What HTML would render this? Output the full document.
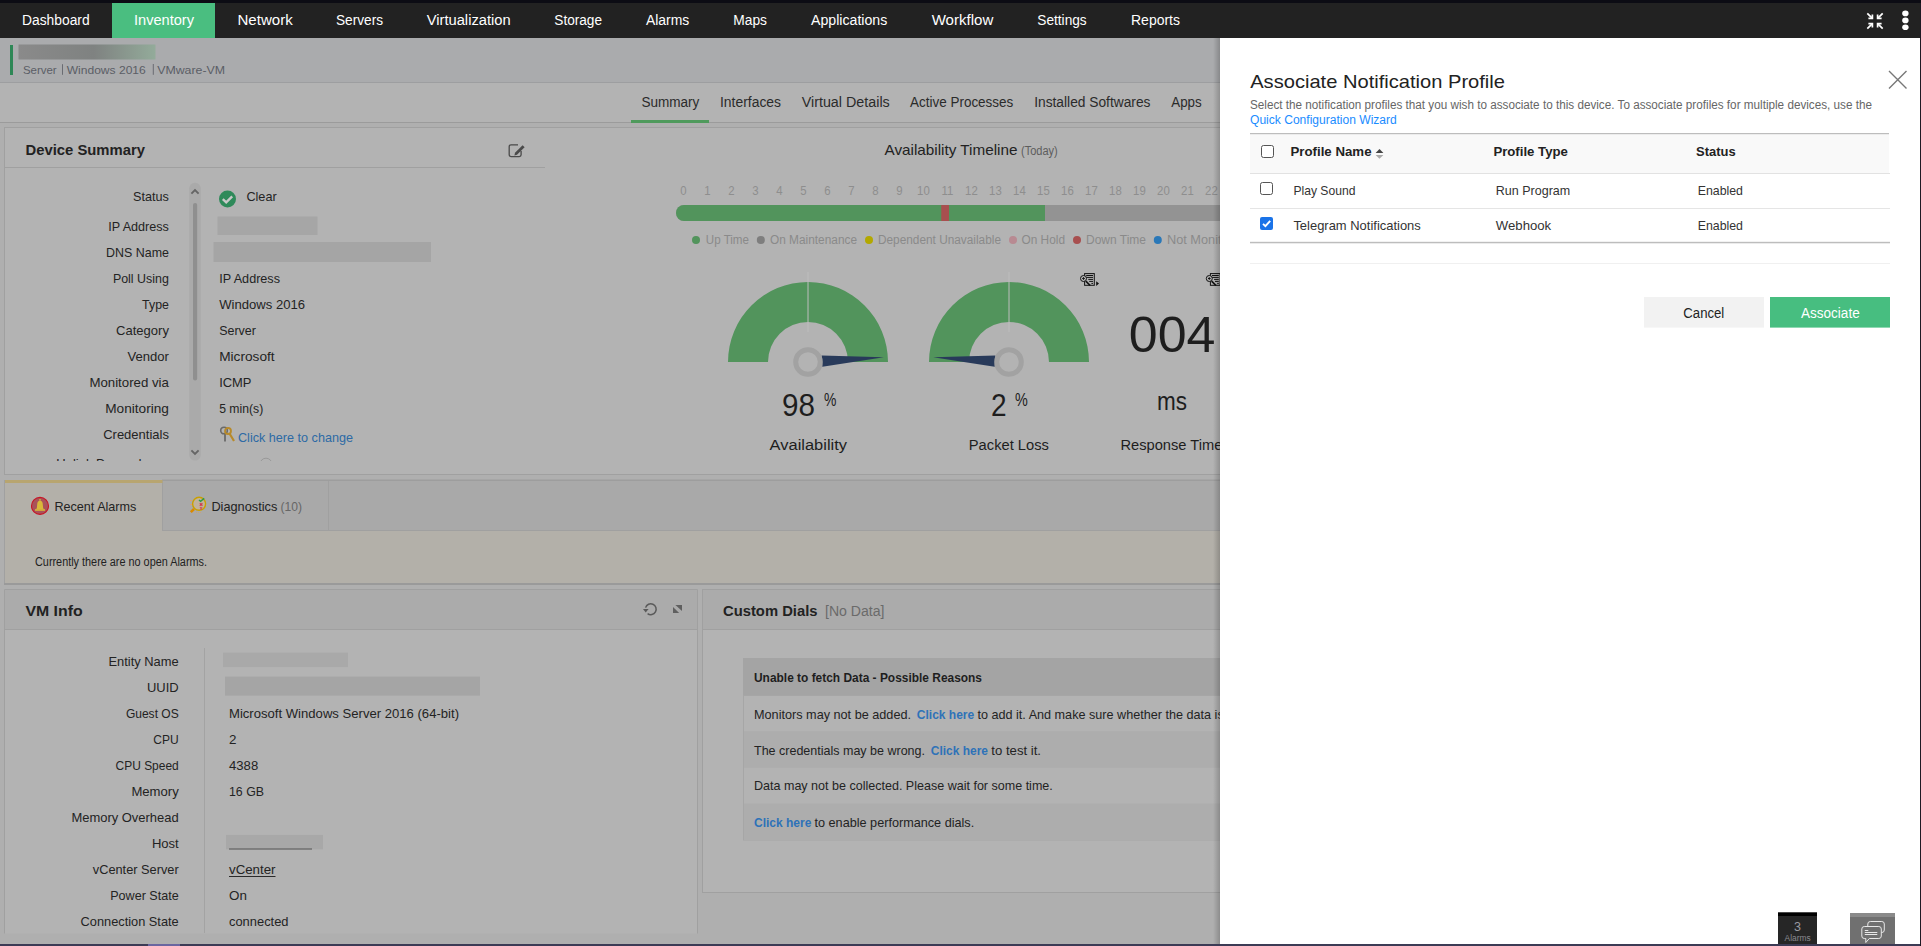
<!DOCTYPE html>
<html><head><meta charset="utf-8"><title>Associate Notification Profile</title>
<style>
html,body{margin:0;padding:0;background:#afafaf;overflow:hidden;}
svg{display:block;font-family:"Liberation Sans",sans-serif;}
</style></head>
<body>
<svg width="1921" height="946" viewBox="0 0 1921 946">
<rect x="0" y="0" width="1921" height="946" fill="#afafaf" />
<rect x="0" y="38" width="1220" height="45" fill="#aaabad" />
<line x1="0" y1="82.5" x2="1220" y2="82.5" stroke="#9d9ea0" stroke-width="1" />
<rect x="10" y="45" width="3" height="30" fill="#2e8756" />
<defs><linearGradient id="gname" x1="0" x2="1" y1="0" y2="0"><stop offset="0" stop-color="#8a8a8a"/><stop offset="0.55" stop-color="#7f8281"/><stop offset="1" stop-color="#93ab9a"/></linearGradient><filter id="blur1" x="-10%" y="-30%" width="120%" height="160%"><feGaussianBlur stdDeviation="0.6"/></filter></defs>
<rect x="18.5" y="44.5" width="137" height="15" fill="url(#gname)" filter="url(#blur1)"/>
<text x="22.9" y="73.8" font-size="11.5" fill="#5b5e66" textLength="33.8" lengthAdjust="spacingAndGlyphs" >Server</text>
<line x1="62.5" y1="64.2" x2="62.5" y2="74.8" stroke="#6a6c72" stroke-width="1" />
<text x="66.7" y="73.8" font-size="11.5" fill="#5b5e66" textLength="79.1" lengthAdjust="spacingAndGlyphs" >Windows 2016</text>
<line x1="153.3" y1="64" x2="153.3" y2="74.8" stroke="#6a6c72" stroke-width="1" />
<text x="157.2" y="73.8" font-size="11.5" fill="#5b5e66" textLength="67.9" lengthAdjust="spacingAndGlyphs" >VMware-VM</text>
<rect x="0" y="83" width="1220" height="39" fill="#b3b3b3" />
<line x1="0" y1="122.5" x2="1220" y2="122.5" stroke="#9b9b9b" stroke-width="1" />
<text x="641.4" y="107" font-size="14" fill="#2b2b2b" textLength="58.0" lengthAdjust="spacingAndGlyphs" >Summary</text>
<text x="720" y="107" font-size="14" fill="#2b2b2b" textLength="61" lengthAdjust="spacingAndGlyphs" >Interfaces</text>
<text x="801.7" y="107" font-size="14" fill="#2b2b2b" textLength="88.1" lengthAdjust="spacingAndGlyphs" >Virtual Details</text>
<text x="910" y="107" font-size="14" fill="#2b2b2b" textLength="103.3" lengthAdjust="spacingAndGlyphs" >Active Processes</text>
<text x="1034.2" y="107" font-size="14" fill="#2b2b2b" textLength="116.3" lengthAdjust="spacingAndGlyphs" >Installed Softwares</text>
<text x="1171.3" y="107" font-size="14" fill="#2b2b2b" textLength="30.4" lengthAdjust="spacingAndGlyphs" >Apps</text>
<rect x="631" y="120" width="78" height="3" fill="#4f9a5c" />
<rect x="4.5" y="127.5" width="1230" height="347" fill="#b3b3b3" stroke="#a0a0a0" stroke-width="1"/>
<text x="25.5" y="154.5" font-size="15" fill="#222" font-weight="700" textLength="119.5" lengthAdjust="spacingAndGlyphs" >Device Summary</text>
<g fill="none" stroke="#4a4a4a" stroke-width="1.3"><path d="M518 144.8 H511 a1.8 1.8 0 0 0 -1.8 1.8 V154.8 a1.8 1.8 0 0 0 1.8 1.8 H519.3 a1.8 1.8 0 0 0 1.8 -1.8 V151"/></g>
<path d="M515 152.8 L522.6 145.2 L524.6 147.2 L517 154.8 L514.4 155.4 Z" fill="#4a4a4a"/>
<line x1="4.5" y1="167.5" x2="545" y2="167.5" stroke="#a0a0a0" stroke-width="1" />
<svg x="0" y="168" width="545" height="293" overflow="hidden"><g transform="translate(0,-168)">
<text x="133.1" y="201" font-size="13.4" fill="#232323" textLength="35.8" lengthAdjust="spacingAndGlyphs" >Status</text>
<text x="108.2" y="231" font-size="13.4" fill="#232323" textLength="60.7" lengthAdjust="spacingAndGlyphs" >IP Address</text>
<text x="106.1" y="257" font-size="13.4" fill="#232323" textLength="62.8" lengthAdjust="spacingAndGlyphs" >DNS Name</text>
<text x="112.9" y="283" font-size="13.4" fill="#232323" textLength="56" lengthAdjust="spacingAndGlyphs" >Poll Using</text>
<text x="142.1" y="309" font-size="13.4" fill="#232323" textLength="26.8" lengthAdjust="spacingAndGlyphs" >Type</text>
<text x="116.1" y="335" font-size="13.4" fill="#232323" textLength="52.8" lengthAdjust="spacingAndGlyphs" >Category</text>
<text x="127.5" y="361" font-size="13.4" fill="#232323" textLength="41.4" lengthAdjust="spacingAndGlyphs" >Vendor</text>
<text x="89.4" y="387" font-size="13.4" fill="#232323" textLength="79.5" lengthAdjust="spacingAndGlyphs" >Monitored via</text>
<text x="105.2" y="413" font-size="13.4" fill="#232323" textLength="63.7" lengthAdjust="spacingAndGlyphs" >Monitoring</text>
<text x="103.2" y="439" font-size="13.4" fill="#232323" textLength="65.7" lengthAdjust="spacingAndGlyphs" >Credentials</text>
<text x="169" y="467.5" font-size="13" fill="#232323" text-anchor="end" >Uplink Dependency</text>
<circle cx="227.5" cy="199" r="8.5" fill="#2f8a5a"/>
<path d="M222.8 199.2 L226.2 202.4 L232.2 196.4" fill="none" stroke="#c9c9c9" stroke-width="2.4"/>
<text x="246.4" y="201" font-size="13.4" fill="#232323" textLength="30.3" lengthAdjust="spacingAndGlyphs" >Clear</text>
<rect x="217.5" y="216.5" width="100" height="18.5" fill="#a6a6a6" filter="url(#blur1)"/>
<rect x="213.5" y="242" width="217.5" height="20" fill="#a5a5a5" filter="url(#blur1)"/>
<text x="219.2" y="283" font-size="13.4" fill="#232323" textLength="60.8" lengthAdjust="spacingAndGlyphs" >IP Address</text>
<text x="219.2" y="309" font-size="13.4" fill="#232323" textLength="85.8" lengthAdjust="spacingAndGlyphs" >Windows 2016</text>
<text x="219.2" y="335" font-size="13.4" fill="#232323" textLength="36.7" lengthAdjust="spacingAndGlyphs" >Server</text>
<text x="219.2" y="361" font-size="13.4" fill="#232323" textLength="55.4" lengthAdjust="spacingAndGlyphs" >Microsoft</text>
<text x="219.2" y="387" font-size="13.4" fill="#232323" textLength="32.3" lengthAdjust="spacingAndGlyphs" >ICMP</text>
<text x="219.2" y="413" font-size="13.4" fill="#232323" textLength="44" lengthAdjust="spacingAndGlyphs" >5 min(s)</text>
<g transform="translate(220,426)"><circle cx="4" cy="4.5" r="3.3" fill="none" stroke="#6a6a6a" stroke-width="1.6"/><path d="M5 7.5 V15.5" stroke="#6a6a6a" stroke-width="1.8"/><circle cx="8" cy="5" r="3" fill="none" stroke="#b88a2a" stroke-width="1.8"/><path d="M9.5 7.5 L14 15" stroke="#b88a2a" stroke-width="2.2"/></g>
<text x="238" y="442" font-size="13" fill="#2d6aa5" textLength="115" lengthAdjust="spacingAndGlyphs" >Click here to change</text>
<path d="M260 464.2 A6 6 0 0 1 272 464.2" fill="none" stroke="#999" stroke-width="1"/>
</g></svg>
<rect x="189.2" y="182.8" width="11.6" height="277.8" rx="5.8" fill="#aaaaaa"/>
<rect x="193" y="203" width="4.2" height="177.5" fill="#8f8f8f" rx="2.1"/>
<path d="M191.4 193.6 L195 190 L198.6 193.6" fill="none" stroke="#656565" stroke-width="1.9"/>
<path d="M191.4 450.4 L195 454 L198.6 450.4" fill="none" stroke="#656565" stroke-width="1.9"/>
<text x="884.5" y="155" font-size="15" fill="#222" textLength="133" lengthAdjust="spacingAndGlyphs" >Availability Timeline</text>
<text x="1021" y="155" font-size="12" fill="#5d5d5d" textLength="36.8" lengthAdjust="spacingAndGlyphs" >(Today)</text>
<g transform="translate(683.4,194.8) scale(0.95,1) translate(-683.4,-194.8)"><text x="683.4" y="194.8" font-size="12" fill="#8e8e8e" text-anchor="middle" >0</text></g>
<g transform="translate(707.4,194.8) scale(0.95,1) translate(-707.4,-194.8)"><text x="707.4" y="194.8" font-size="12" fill="#8e8e8e" text-anchor="middle" >1</text></g>
<g transform="translate(731.4,194.8) scale(0.95,1) translate(-731.4,-194.8)"><text x="731.4" y="194.8" font-size="12" fill="#8e8e8e" text-anchor="middle" >2</text></g>
<g transform="translate(755.4,194.8) scale(0.95,1) translate(-755.4,-194.8)"><text x="755.4" y="194.8" font-size="12" fill="#8e8e8e" text-anchor="middle" >3</text></g>
<g transform="translate(779.4,194.8) scale(0.95,1) translate(-779.4,-194.8)"><text x="779.4" y="194.8" font-size="12" fill="#8e8e8e" text-anchor="middle" >4</text></g>
<g transform="translate(803.4,194.8) scale(0.95,1) translate(-803.4,-194.8)"><text x="803.4" y="194.8" font-size="12" fill="#8e8e8e" text-anchor="middle" >5</text></g>
<g transform="translate(827.4,194.8) scale(0.95,1) translate(-827.4,-194.8)"><text x="827.4" y="194.8" font-size="12" fill="#8e8e8e" text-anchor="middle" >6</text></g>
<g transform="translate(851.4,194.8) scale(0.95,1) translate(-851.4,-194.8)"><text x="851.4" y="194.8" font-size="12" fill="#8e8e8e" text-anchor="middle" >7</text></g>
<g transform="translate(875.4,194.8) scale(0.95,1) translate(-875.4,-194.8)"><text x="875.4" y="194.8" font-size="12" fill="#8e8e8e" text-anchor="middle" >8</text></g>
<g transform="translate(899.4,194.8) scale(0.95,1) translate(-899.4,-194.8)"><text x="899.4" y="194.8" font-size="12" fill="#8e8e8e" text-anchor="middle" >9</text></g>
<g transform="translate(923.4,194.8) scale(0.95,1) translate(-923.4,-194.8)"><text x="923.4" y="194.8" font-size="12" fill="#8e8e8e" text-anchor="middle" >10</text></g>
<g transform="translate(947.4,194.8) scale(0.95,1) translate(-947.4,-194.8)"><text x="947.4" y="194.8" font-size="12" fill="#8e8e8e" text-anchor="middle" >11</text></g>
<g transform="translate(971.4,194.8) scale(0.95,1) translate(-971.4,-194.8)"><text x="971.4" y="194.8" font-size="12" fill="#8e8e8e" text-anchor="middle" >12</text></g>
<g transform="translate(995.4,194.8) scale(0.95,1) translate(-995.4,-194.8)"><text x="995.4" y="194.8" font-size="12" fill="#8e8e8e" text-anchor="middle" >13</text></g>
<g transform="translate(1019.4,194.8) scale(0.95,1) translate(-1019.4,-194.8)"><text x="1019.4" y="194.8" font-size="12" fill="#8e8e8e" text-anchor="middle" >14</text></g>
<g transform="translate(1043.4,194.8) scale(0.95,1) translate(-1043.4,-194.8)"><text x="1043.4" y="194.8" font-size="12" fill="#8e8e8e" text-anchor="middle" >15</text></g>
<g transform="translate(1067.4,194.8) scale(0.95,1) translate(-1067.4,-194.8)"><text x="1067.4" y="194.8" font-size="12" fill="#8e8e8e" text-anchor="middle" >16</text></g>
<g transform="translate(1091.4,194.8) scale(0.95,1) translate(-1091.4,-194.8)"><text x="1091.4" y="194.8" font-size="12" fill="#8e8e8e" text-anchor="middle" >17</text></g>
<g transform="translate(1115.4,194.8) scale(0.95,1) translate(-1115.4,-194.8)"><text x="1115.4" y="194.8" font-size="12" fill="#8e8e8e" text-anchor="middle" >18</text></g>
<g transform="translate(1139.4,194.8) scale(0.95,1) translate(-1139.4,-194.8)"><text x="1139.4" y="194.8" font-size="12" fill="#8e8e8e" text-anchor="middle" >19</text></g>
<g transform="translate(1163.4,194.8) scale(0.95,1) translate(-1163.4,-194.8)"><text x="1163.4" y="194.8" font-size="12" fill="#8e8e8e" text-anchor="middle" >20</text></g>
<g transform="translate(1187.4,194.8) scale(0.95,1) translate(-1187.4,-194.8)"><text x="1187.4" y="194.8" font-size="12" fill="#8e8e8e" text-anchor="middle" >21</text></g>
<g transform="translate(1211.4,194.8) scale(0.95,1) translate(-1211.4,-194.8)"><text x="1211.4" y="194.8" font-size="12" fill="#8e8e8e" text-anchor="middle" >22</text></g>
<svg x="676" y="205" width="544" height="16" overflow="hidden"><rect x="0" y="0" width="700" height="16" rx="8" fill="#939393"/><path d="M8 0 H369 V16 H8 A8 8 0 0 1 8 0 Z" fill="#52945c"/><rect x="265.25" y="0" width="7.75" height="16" fill="#a84f4f"/></svg>
<circle cx="696" cy="240" r="4" fill="#52945c"/>
<text x="705.8" y="244" font-size="12.5" fill="#8a8a8a" textLength="43.2" lengthAdjust="spacingAndGlyphs" >Up Time</text>
<circle cx="760.8" cy="240" r="4" fill="#7e7e7e"/>
<text x="770" y="244" font-size="12.5" fill="#8a8a8a" textLength="87" lengthAdjust="spacingAndGlyphs" >On Maintenance</text>
<circle cx="869" cy="240" r="4" fill="#b3a800"/>
<text x="878" y="244" font-size="12.5" fill="#8a8a8a" textLength="123" lengthAdjust="spacingAndGlyphs" >Dependent Unavailable</text>
<circle cx="1013" cy="240" r="4" fill="#b88a92"/>
<text x="1021.5" y="244" font-size="12.5" fill="#8a8a8a" textLength="43.5" lengthAdjust="spacingAndGlyphs" >On Hold</text>
<circle cx="1077" cy="240" r="4" fill="#a84f4f"/>
<text x="1086" y="244" font-size="12.5" fill="#8a8a8a" textLength="60" lengthAdjust="spacingAndGlyphs" >Down Time</text>
<circle cx="1157.8" cy="240" r="4" fill="#2a78b8"/>
<text x="1167" y="244" font-size="12.5" fill="#8a8a8a" textLength="80" lengthAdjust="spacingAndGlyphs" >Not Monitored</text>
<path d="M728 362 A80 80 0 0 1 888 362 L848 362 A40 40 0 0 0 768 362 Z" fill="#52945c"/>
<line x1="808" y1="272" x2="808" y2="332" stroke="#bdbdbd" stroke-width="1" />
<path d="M822.32 366.71 L883.85 357.23 L821.62 355.53 Z" fill="#283a5a"/>
<circle cx="808" cy="362" r="12.3" fill="#b3b3b3" stroke="#a2a2a2" stroke-width="5"/>
<path d="M929 362 A80 80 0 0 1 1089 362 L1049 362 A40 40 0 0 0 969 362 Z" fill="#52945c"/>
<line x1="1009" y1="272" x2="1009" y2="332" stroke="#bdbdbd" stroke-width="1" />
<path d="M995.38 355.53 L933.15 357.23 L994.68 366.71 Z" fill="#283a5a"/>
<circle cx="1009" cy="362" r="12.3" fill="#b3b3b3" stroke="#a2a2a2" stroke-width="5"/>
<text x="782" y="416.4" font-size="31" fill="#1e1e1e" textLength="33" lengthAdjust="spacingAndGlyphs" >98</text>
<text x="824" y="405.5" font-size="19" fill="#1e1e1e" textLength="12.4" lengthAdjust="spacingAndGlyphs" >%</text>
<text x="769.6" y="449.6" font-size="15.5" fill="#1e1e1e" textLength="77.4" lengthAdjust="spacingAndGlyphs" >Availability</text>
<text x="991" y="416.4" font-size="31" fill="#1e1e1e" textLength="15.6" lengthAdjust="spacingAndGlyphs" >2</text>
<text x="1015" y="405.5" font-size="19" fill="#1e1e1e" textLength="12.8" lengthAdjust="spacingAndGlyphs" >%</text>
<text x="968.8" y="449.6" font-size="15.5" fill="#1e1e1e" textLength="80.1" lengthAdjust="spacingAndGlyphs" >Packet Loss</text>
<text x="1128.8" y="352" font-size="50" fill="#1e1e1e" textLength="86.7" lengthAdjust="spacingAndGlyphs" >004</text>
<text x="1157" y="409.7" font-size="25" fill="#1e1e1e" textLength="30" lengthAdjust="spacingAndGlyphs" >ms</text>
<text x="1120.4" y="449.6" font-size="15.5" fill="#1e1e1e" textLength="102" lengthAdjust="spacingAndGlyphs" >Response Time</text>
<g transform="translate(0,0)"><g stroke="#111" fill="none" stroke-width="1"><rect x="1084.6" y="273.6" width="9.7" height="11.7"/><path d="M1086.2 275.5 H1093 M1086.2 277.4 H1093 M1088.3 279.4 H1093 M1089.2 281.4 H1093 M1091.4 283.4 H1093"/><circle cx="1083.5" cy="278.5" r="3" fill="#b3b3b3"/><path d="M1083.5 277.2 V279.8 M1082.2 278.5 H1084.8"/><path d="M1085.8 281.2 L1090.2 285.5" stroke-width="1.7"/></g><path d="M1096.2 281.2 L1099 283.6 L1096.2 286 Z" fill="#111"/></g>
<g transform="translate(125.8,0)"><g stroke="#111" fill="none" stroke-width="1"><rect x="1084.6" y="273.6" width="9.7" height="11.7"/><path d="M1086.2 275.5 H1093 M1086.2 277.4 H1093 M1088.3 279.4 H1093 M1089.2 281.4 H1093 M1091.4 283.4 H1093"/><circle cx="1083.5" cy="278.5" r="3" fill="#b3b3b3"/><path d="M1083.5 277.2 V279.8 M1082.2 278.5 H1084.8"/><path d="M1085.8 281.2 L1090.2 285.5" stroke-width="1.7"/></g><path d="M1096.2 281.2 L1099 283.6 L1096.2 286 Z" fill="#111"/></g>
<rect x="5" y="480" width="1220" height="103" fill="#b3b0a9" />
<rect x="162" y="480" width="1060" height="51" fill="#a9a9a9" />
<line x1="162.5" y1="480" x2="162.5" y2="531" stroke="#a0a0a0" stroke-width="1" />
<line x1="328.5" y1="480" x2="328.5" y2="531" stroke="#a0a0a0" stroke-width="1" />
<line x1="162" y1="530.5" x2="1220" y2="530.5" stroke="#a0a0a0" stroke-width="1" />
<rect x="162" y="479.5" width="1060" height="1.5" fill="#9d9d9d" />
<rect x="5" y="480" width="157.5" height="3" fill="#b8a56f" />
<line x1="4.5" y1="480" x2="4.5" y2="584" stroke="#a0a0a0" stroke-width="1" />
<rect x="4" y="583" width="1216" height="2" fill="#9a9a9a" />
<circle cx="40" cy="505.9" r="8.5" fill="#a9525a" stroke="#c81424" stroke-width="1.1"/>
<path d="M36 509.5 Q37.2 508 37.2 504.5 Q37.2 500.8 40 500.4 Q42.8 500.8 42.8 504.5 Q42.8 508 44 509.5 Z" fill="#d9b83a"/>
<rect x="39.3" y="499" width="1.4" height="1.6" fill="#d9b83a"/><rect x="35" y="509.2" width="10" height="1.6" fill="#d9b83a"/>
<text x="54.4" y="510.6" font-size="13" fill="#232323" textLength="82" lengthAdjust="spacingAndGlyphs" >Recent Alarms</text>
<circle cx="199.1" cy="503.8" r="6.5" fill="#c2b29c" stroke="#c9a000" stroke-width="1.4"/><path d="M194 509 L190.8 512.2" stroke="#d98a00" stroke-width="2.6"/><path d="M199 500 L200.6 501.4 L204.2 498.4" fill="none" stroke="#2a9a50" stroke-width="1.4"/><path d="M199.8 503.3 L202.4 505.8 M202.4 503.3 L199.8 505.8" stroke="#d04050" stroke-width="1.2"/><path d="M200 507.3 L202.2 509.3 M202.2 507.3 L200 509.3" stroke="#d04050" stroke-width="1.1"/><path d="M196.3 512.4 h0.8 M198.2 512.4 h0.8 M200.1 512.4 h0.8" stroke="#d9a060" stroke-width="0.9"/><path d="M190 500.5 h2 M190 504.5 h2" stroke="#d9a070" stroke-width="1"/>
<text x="211.4" y="511" font-size="13" fill="#232323" textLength="65.9" lengthAdjust="spacingAndGlyphs" >Diagnostics</text>
<text x="280.5" y="511" font-size="13" fill="#666" textLength="21.5" lengthAdjust="spacingAndGlyphs" >(10)</text>
<text x="35" y="565.6" font-size="12" fill="#222" textLength="172" lengthAdjust="spacingAndGlyphs" >Currently there are no open Alarms.</text>
<rect x="4.5" y="589.5" width="693" height="344" fill="#b3b3b3" />
<path d="M4.5 933.5 V589.5 H697.5 V933.5" fill="none" stroke="#a0a0a0" stroke-width="1"/>
<rect x="5" y="590" width="692" height="39.5" fill="#ababab" />
<line x1="4.5" y1="629.5" x2="697.5" y2="629.5" stroke="#a0a0a0" stroke-width="1" />
<text x="25.4" y="616" font-size="15" fill="#222" font-weight="700" textLength="57.2" lengthAdjust="spacingAndGlyphs" >VM Info</text>
<path d="M645.6 607.6 A5.4 5.4 0 1 1 647.6 613.6" fill="none" stroke="#5a5a5a" stroke-width="1.5"/>
<path d="M643 609.1 L648.6 609.1 L645.7 612.5 Z" fill="#5a5a5a"/>
<path d="M675.4 605 H682 V611 Z" fill="#5f5f5f"/><path d="M673 607.1 V613 H679.2 Z" fill="#5f5f5f"/>
<line x1="204.5" y1="648" x2="204.5" y2="933" stroke="#a3a3a3" stroke-width="1" />
<text x="108.5" y="666" font-size="13.4" fill="#232323" textLength="70.2" lengthAdjust="spacingAndGlyphs" >Entity Name</text>
<text x="147.0" y="692" font-size="13.4" fill="#232323" textLength="31.7" lengthAdjust="spacingAndGlyphs" >UUID</text>
<text x="125.9" y="718" font-size="13.4" fill="#232323" textLength="52.8" lengthAdjust="spacingAndGlyphs" >Guest OS</text>
<text x="229" y="718" font-size="13.4" fill="#232323" textLength="230" lengthAdjust="spacingAndGlyphs" >Microsoft Windows Server 2016 (64-bit)</text>
<text x="153.3" y="744" font-size="13.4" fill="#232323" textLength="25.4" lengthAdjust="spacingAndGlyphs" >CPU</text>
<text x="229" y="744" font-size="13.4" fill="#232323" >2</text>
<text x="115.6" y="770" font-size="13.4" fill="#232323" textLength="63.1" lengthAdjust="spacingAndGlyphs" >CPU Speed</text>
<text x="229" y="770" font-size="13.4" fill="#232323" textLength="29.2" lengthAdjust="spacingAndGlyphs" >4388</text>
<text x="131.4" y="796" font-size="13.4" fill="#232323" textLength="47.3" lengthAdjust="spacingAndGlyphs" >Memory</text>
<text x="229" y="796" font-size="13.4" fill="#232323" textLength="35" lengthAdjust="spacingAndGlyphs" >16 GB</text>
<text x="71.4" y="822" font-size="13.4" fill="#232323" textLength="107.3" lengthAdjust="spacingAndGlyphs" >Memory Overhead</text>
<text x="151.9" y="848" font-size="13.4" fill="#232323" textLength="26.8" lengthAdjust="spacingAndGlyphs" >Host</text>
<text x="92.8" y="874" font-size="13.4" fill="#232323" textLength="85.9" lengthAdjust="spacingAndGlyphs" >vCenter Server</text>
<text x="229" y="874" font-size="13.4" fill="#232323" textLength="46.5" lengthAdjust="spacingAndGlyphs" >vCenter</text>
<text x="110.2" y="900" font-size="13.4" fill="#232323" textLength="68.5" lengthAdjust="spacingAndGlyphs" >Power State</text>
<text x="229" y="900" font-size="13.4" fill="#232323" >On</text>
<text x="80.6" y="926" font-size="13.4" fill="#232323" textLength="98.1" lengthAdjust="spacingAndGlyphs" >Connection State</text>
<text x="229" y="926" font-size="13.4" fill="#232323" textLength="59.5" lengthAdjust="spacingAndGlyphs" >connected</text>
<rect x="223" y="652.6" width="125" height="14.5" fill="#a9a9a9" filter="url(#blur1)"/>
<rect x="225" y="676.6" width="255" height="19" fill="#a5a5a5" filter="url(#blur1)"/>
<rect x="226" y="834.8" width="97" height="14.6" fill="#a8a8a8" filter="url(#blur1)"/>
<line x1="229" y1="849" x2="312" y2="849" stroke="#555" stroke-width="1" />
<line x1="229" y1="876.5" x2="275.5" y2="876.5" stroke="#2a2a2a" stroke-width="1" />
<rect x="702.5" y="589.5" width="540" height="303" fill="#b3b3b3" stroke="#a0a0a0" stroke-width="1"/>
<rect x="703" y="590" width="540" height="39.5" fill="#ababab" />
<line x1="702.5" y1="629.5" x2="1230" y2="629.5" stroke="#a0a0a0" stroke-width="1" />
<text x="723" y="616" font-size="15" fill="#222" font-weight="700" textLength="94.5" lengthAdjust="spacingAndGlyphs" >Custom Dials</text>
<text x="825" y="616" font-size="14" fill="#6a6a6a" textLength="59.5" lengthAdjust="spacingAndGlyphs" >[No Data]</text>
<rect x="743" y="658" width="500" height="37.5" fill="#a4a4a4" />
<rect x="743.5" y="695.5" width="500" height="144.5" fill="#b3b3b3" stroke="#a6a6a6" stroke-width="1"/>
<rect x="744" y="731.3" width="500" height="36.5" fill="#adadad" />
<rect x="744" y="803.5" width="500" height="36.5" fill="#adadad" />
<text x="754" y="682" font-size="13" fill="#1e1e1e" font-weight="700" textLength="228" lengthAdjust="spacingAndGlyphs" >Unable to fetch Data - Possible Reasons</text>
<text x="754" y="718.6" font-size="13" fill="#232323" textLength="157" lengthAdjust="spacingAndGlyphs" >Monitors may not be added.</text>
<text x="916.8" y="718.6" font-size="13" fill="#2e72b8" font-weight="700" textLength="57.4" lengthAdjust="spacingAndGlyphs" >Click here</text>
<text x="977.4" y="718.6" font-size="13.4" fill="#232323" textLength="337.6" lengthAdjust="spacingAndGlyphs" >to add it. And make sure whether the data is being collected.</text>
<text x="754" y="754.5" font-size="13" fill="#232323" textLength="171" lengthAdjust="spacingAndGlyphs" >The credentials may be wrong.</text>
<text x="930.8" y="754.5" font-size="13" fill="#2e72b8" font-weight="700" textLength="57.2" lengthAdjust="spacingAndGlyphs" >Click here</text>
<text x="991.3" y="754.5" font-size="13" fill="#232323" textLength="49.7" lengthAdjust="spacingAndGlyphs" >to test it.</text>
<text x="754" y="790.3" font-size="13" fill="#232323" textLength="298.8" lengthAdjust="spacingAndGlyphs" >Data may not be collected. Please wait for some time.</text>
<text x="754" y="826.5" font-size="13" fill="#2e72b8" font-weight="700" textLength="57.4" lengthAdjust="spacingAndGlyphs" >Click here</text>
<text x="814.5" y="826.5" font-size="13" fill="#232323" textLength="159.7" lengthAdjust="spacingAndGlyphs" >to enable performance dials.</text>
<rect x="0" y="944" width="1921" height="2" fill="#3c3b55" />
<rect x="148" y="944" width="32" height="2" fill="#6a66a0" />
<defs><linearGradient id="shadow" x1="0" x2="1"><stop offset="0" stop-color="#000" stop-opacity="0"/><stop offset="1" stop-color="#000" stop-opacity="0.2"/></linearGradient></defs>
<rect x="1213" y="38" width="7" height="906" fill="url(#shadow)" />
<rect x="1220" y="38" width="700" height="906" fill="#ffffff" />
<rect x="1920" y="0" width="1" height="946" fill="#1e1a24" />
<text x="1250.2" y="88.1" font-size="19" fill="#222" textLength="254.8" lengthAdjust="spacingAndGlyphs" >Associate Notification Profile</text>
<path d="M1889 71 L1906.5 88.5 M1906.5 71 L1889 88.5" stroke="#777" stroke-width="1.4"/>
<text x="1250" y="109.1" font-size="12" fill="#666" textLength="622" lengthAdjust="spacingAndGlyphs" >Select the notification profiles that you wish to associate to this device. To associate profiles for multiple devices, use the</text>
<text x="1250" y="124" font-size="12" fill="#1a8cff" textLength="146.8" lengthAdjust="spacingAndGlyphs" >Quick Configuration Wizard</text>
<rect x="1250" y="133" width="639" height="1.5" fill="#bdbdbd" />
<rect x="1250" y="134.5" width="639" height="38.5" fill="#f9f9f9" />
<line x1="1250" y1="173.5" x2="1890" y2="173.5" stroke="#e2e2e2" stroke-width="1" />
<line x1="1250" y1="208.5" x2="1890" y2="208.5" stroke="#e5e5e5" stroke-width="1" />
<rect x="1250" y="241.8" width="640" height="1.5" fill="#bdbdbd" />
<line x1="1250" y1="263.5" x2="1890" y2="263.5" stroke="#f0f0f0" stroke-width="1" />
<rect x="1261.5" y="145.5" width="12" height="12" rx="2" fill="#fff" stroke="#555" stroke-width="1"/>
<rect x="1260.5" y="182.5" width="12" height="12" rx="2" fill="#fff" stroke="#555" stroke-width="1"/>
<rect x="1260" y="217" width="13" height="13" rx="2" fill="#1a73e8"/>
<path d="M1263 223.8 L1265.4 226.2 L1270.2 220.8" fill="none" stroke="#fff" stroke-width="1.9"/>
<text x="1290.5" y="156.1" font-size="13.5" fill="#222" font-weight="700" textLength="81" lengthAdjust="spacingAndGlyphs" >Profile Name</text>
<path d="M1375.6 153 L1379.5 149 L1383.4 153 Z" fill="#444"/><path d="M1375.6 155 L1379.5 158.8 L1383.4 155 Z" fill="#aaa"/>
<text x="1493.4" y="156.1" font-size="13.5" fill="#222" font-weight="700" textLength="74.5" lengthAdjust="spacingAndGlyphs" >Profile Type</text>
<text x="1696" y="156.1" font-size="13.5" fill="#222" font-weight="700" textLength="39.6" lengthAdjust="spacingAndGlyphs" >Status</text>
<text x="1293.4" y="195" font-size="13" fill="#333" textLength="62" lengthAdjust="spacingAndGlyphs" >Play Sound</text>
<text x="1495.8" y="195" font-size="13" fill="#333" textLength="74.4" lengthAdjust="spacingAndGlyphs" >Run Program</text>
<text x="1697.7" y="195" font-size="13" fill="#333" textLength="45.3" lengthAdjust="spacingAndGlyphs" >Enabled</text>
<text x="1293.4" y="229.8" font-size="13" fill="#333" textLength="127.4" lengthAdjust="spacingAndGlyphs" >Telegram Notifications</text>
<text x="1495.8" y="229.8" font-size="13" fill="#333" textLength="55.4" lengthAdjust="spacingAndGlyphs" >Webhook</text>
<text x="1697.7" y="229.8" font-size="13" fill="#333" textLength="45.3" lengthAdjust="spacingAndGlyphs" >Enabled</text>
<rect x="1644" y="297" width="120" height="30.6" fill="#f2f2f2" />
<text x="1683.3" y="318.2" font-size="14" fill="#222" textLength="41" lengthAdjust="spacingAndGlyphs" >Cancel</text>
<rect x="1770" y="297" width="120" height="30.6" fill="#47be80" />
<text x="1801" y="318.2" font-size="14" fill="#fff" textLength="58.7" lengthAdjust="spacingAndGlyphs" >Associate</text>
<rect x="1778" y="912.5" width="39" height="31.5" fill="#262626" />
<rect x="1778" y="912.5" width="39" height="3.5" fill="#000" />
<text x="1797.5" y="930.8" font-size="12.5" fill="#9a9aa0" text-anchor="middle" >3</text>
<text x="1784.6" y="940.5" font-size="8.5" fill="#8a8a90" textLength="26" lengthAdjust="spacingAndGlyphs" >Alarms</text>
<rect x="1850" y="913" width="45" height="31" fill="#707070" />
<rect x="1850" y="913" width="45" height="4" fill="#8a8a8a" />
<g fill="none" stroke="#e8e8e8" stroke-width="1" transform="translate(1.3,0)"><rect x="1866.5" y="921.5" width="16.5" height="11" rx="2.5"/><path d="M1863 926.5 H1877.5 a2.5 2.5 0 0 1 2.5 2.5 V936 a2.5 2.5 0 0 1 -2.5 2.5 H1868 L1864.5 942.5 V938.5 H1863 a2.5 2.5 0 0 1 -2.5 -2.5 V929 a2.5 2.5 0 0 1 2.5 -2.5 Z" fill="#707070"/><path d="M1863.5 930.5 H1867 M1863.5 932.5 H1876 M1863.5 934.5 H1876"/></g>
<rect x="0" y="0" width="1921" height="3" fill="#0c0c14" />
<rect x="0" y="3" width="1920" height="35" fill="#222222" />
<rect x="112" y="3" width="103" height="35" fill="#4abe80" />
<text x="22" y="25.4" font-size="15.5" fill="#ffffff" textLength="67.6" lengthAdjust="spacingAndGlyphs" >Dashboard</text>
<text x="134" y="25.4" font-size="15.5" fill="#ffffff" textLength="60" lengthAdjust="spacingAndGlyphs" >Inventory</text>
<text x="237.5" y="25.4" font-size="15.5" fill="#ffffff" textLength="55.2" lengthAdjust="spacingAndGlyphs" >Network</text>
<text x="336" y="25.4" font-size="15.5" fill="#ffffff" textLength="47" lengthAdjust="spacingAndGlyphs" >Servers</text>
<text x="426.7" y="25.4" font-size="15.5" fill="#ffffff" textLength="84.0" lengthAdjust="spacingAndGlyphs" >Virtualization</text>
<text x="554.3" y="25.4" font-size="15.5" fill="#ffffff" textLength="47.7" lengthAdjust="spacingAndGlyphs" >Storage</text>
<text x="646" y="25.4" font-size="15.5" fill="#ffffff" textLength="43.3" lengthAdjust="spacingAndGlyphs" >Alarms</text>
<text x="733.3" y="25.4" font-size="15.5" fill="#ffffff" textLength="33.7" lengthAdjust="spacingAndGlyphs" >Maps</text>
<text x="811" y="25.4" font-size="15.5" fill="#ffffff" textLength="76.3" lengthAdjust="spacingAndGlyphs" >Applications</text>
<text x="931.7" y="25.4" font-size="15.5" fill="#ffffff" textLength="61.6" lengthAdjust="spacingAndGlyphs" >Workflow</text>
<text x="1037.3" y="25.4" font-size="15.5" fill="#ffffff" textLength="49.4" lengthAdjust="spacingAndGlyphs" >Settings</text>
<text x="1131" y="25.4" font-size="15.5" fill="#ffffff" textLength="49" lengthAdjust="spacingAndGlyphs" >Reports</text>
<g stroke="#fff" stroke-width="1.7" fill="none" stroke-linecap="butt"><path d="M1867.3 13.3 L1872.4 18.4 M1882.7 13.3 L1877.6 18.4 M1867.3 28.7 L1872.4 23.6 M1882.7 28.7 L1877.6 23.6"/><path d="M1868.4 18.4 H1872.4 V14.4 M1881.6 18.4 H1877.6 V14.4 M1868.4 23.6 H1872.4 V27.6 M1881.6 23.6 H1877.6 V27.6"/></g>
<ellipse cx="1905.4" cy="13.4" rx="3.2" ry="2.8" fill="#fff"/>
<ellipse cx="1905.4" cy="20.4" rx="3.2" ry="2.8" fill="#fff"/>
<ellipse cx="1905.4" cy="27.3" rx="3.2" ry="2.8" fill="#fff"/>
</svg>
</body></html>
